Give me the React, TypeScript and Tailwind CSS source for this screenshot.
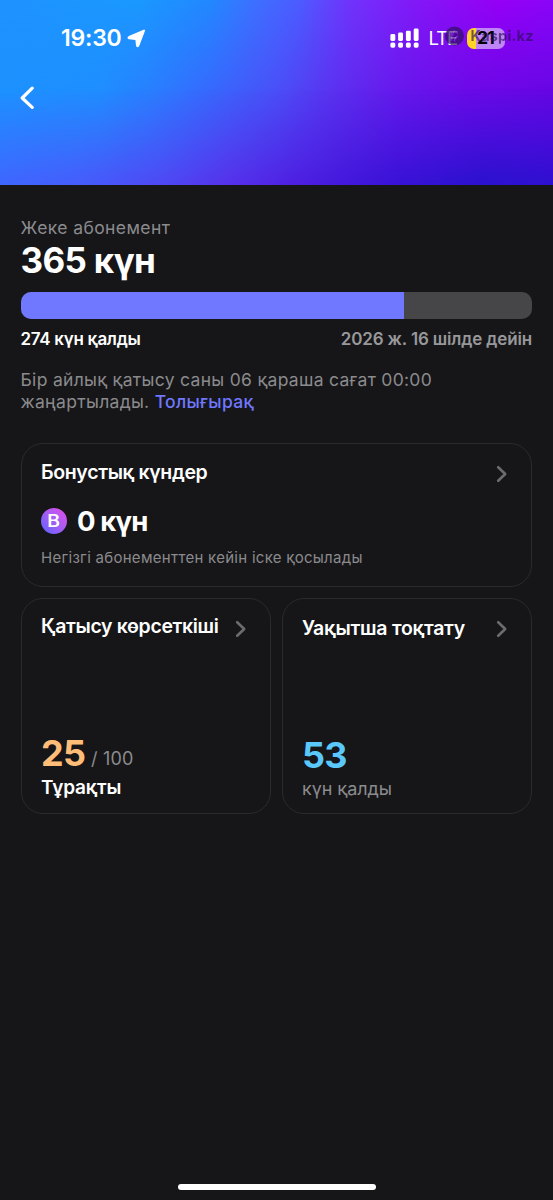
import type { ReactNode } from 'react';
import { clsx } from 'clsx';

function StatusBar() {
  const bars = [
    { x: 389.9, top: 33.6 },
    { x: 397.6, top: 32 },
    { x: 405.4, top: 30.2 },
    { x: 413.2, top: 28 },
  ];

  return (
    <div className="relative flex h-[76px] items-center justify-between text-white">
      <div className="flex items-center gap-[5px] pl-[61px]">
        <span className="text-[23px] leading-7 font-semibold tracking-[-0.2px]">19:30</span>
        <svg width="19" height="19" viewBox="0 0 19 19" fill="currentColor" stroke="currentColor" strokeWidth="2" strokeLinejoin="round">
          <path d="M17 1.6 L11.2 16.8 Q10.4 18 10 16.6 L9.4 10.9 Q9.2 10 8.4 9.9 L2.2 9.3 Q0.8 8.8 2.2 8 Z" />
        </svg>
      </div>
      <div className="flex items-center pr-[48.5px]">
        <svg width="29" height="20" viewBox="389.5 27.5 29 20" fill="currentColor">
          {bars.map((bar) => (
            <g key={bar.x}>
              <rect x={bar.x} y={bar.top} width="4.9" height={40.4 - bar.top} rx="1.4" />
              <rect x={bar.x} y="42" width="4.9" height="5.2" rx="1.6" />
            </g>
          ))}
        </svg>
        <span className="ml-[10px] w-7 text-[18.5px] leading-6 tracking-[-1px]">LTE</span>
        <div className="ml-[10px] flex h-[21px] w-[38px] items-center justify-center rounded-[7px] bg-linear-to-r from-[#ffd426] from-24% to-[#bd86f4] to-24% text-[17.5px] leading-5 font-bold tracking-[-0.8px] text-black">
          21
        </div>
      </div>
      <Watermark />
    </div>
  );
}

function Watermark() {
  return (
    <div className="absolute top-[26px] left-[444.5px] flex items-center gap-[7px] text-[#2a0f5a] opacity-65">
      <svg width="19" height="20" viewBox="0 0 20 20">
        <circle cx="10" cy="10" r="10" fill="currentColor" />
        <path d="M7 5 V15 M7 11 Q9 7 10 4 M10 16 Q10 11 14 10 M13 5 V8" stroke="#7a22d8" strokeWidth="1.4" fill="none" />
      </svg>
      <span className="text-[14.5px] leading-5 font-bold tracking-[0.2px]">Kaspi.kz</span>
    </div>
  );
}

function Header() {
  return (
    <header className="relative h-[185px] bg-[linear-gradient(90deg,#1c92ff_0%,#1f8eff_18%,#297fff_27%,#356cfe_36%,#4a4ff8_50%,#5a32f0_60%,#6618ec_72%,#6a0ae8_85%,#6606e4_100%)]">
      <div className="absolute inset-0 bg-[linear-gradient(90deg,#1f92ff_0%,#1a98ff_25%,#2288ff_38%,#3d70ff_46%,#4c5cff_54%,#7034fc_63%,#8416f7_76%,#9500f5_90%,#8a05f8_100%)] mask-[linear-gradient(180deg,#000_0%,transparent_52%)]" />
      <div className="absolute inset-0 bg-[linear-gradient(90deg,#3f66ff_0%,#465cfc_14%,#4f48f4_29%,#5630ea_42%,#4d1ee0_54%,#3812d6_72%,#2a12ce_87%,#2e10d0_100%)] mask-[linear-gradient(180deg,transparent_48%,#000_100%)]" />
      <StatusBar />
      <button className="relative block pt-[10px] pl-[20px]" aria-label="Back">
        <svg width="16" height="24" viewBox="0 0 16 24" fill="none" stroke="#fff" strokeWidth="3.2" strokeLinecap="round" strokeLinejoin="round">
          <path d="M12.2 2.2 L2.2 12 L12.2 21.4" />
        </svg>
      </button>
    </header>
  );
}

function Chevron() {
  return (
    <svg className="shrink-0" width="12" height="18" viewBox="0 0 12 18" fill="none" stroke="#6c6c6f" strokeWidth="2.6" strokeLinecap="round" strokeLinejoin="round">
      <path d="M2.2 2.2 L9.2 9 L2.2 15.8" />
    </svg>
  );
}

function Card({ className, children }: { className?: string; children: ReactNode }) {
  return (
    <section className={clsx('flex flex-col rounded-[22px] border border-[#2a2a2c] px-[19.5px]', className)}>
      {children}
    </section>
  );
}

export default function App() {
  return (
    <div className="flex h-[1200px] w-[553px] flex-col overflow-hidden bg-[#161618] font-['Inter',sans-serif] text-white">
      <Header />
      <main className="flex flex-1 flex-col pt-[33px] pr-[21px] pl-[20.5px]">
        <p className="text-[17.5px] leading-5 tracking-[0.4px] text-[#8b8b8e]">Жеке абонемент</p>
        <h1 className="mt-[2px] text-[35px] leading-10 font-bold tracking-[-0.7px]">365 күн</h1>
        <div className="mt-3 h-[27px] overflow-hidden rounded-[10px] bg-[#464648]">
          <div className="h-full w-3/4 bg-[#6f78ff]" />
        </div>
        <div className="mt-[10px] flex justify-between text-[17px] leading-5 font-semibold">
          <span className="tracking-[-0.3px]">274 күн қалды</span>
          <span className="tracking-[-0.15px] text-[#98989b]">2026 ж. 16 шілде дейін</span>
        </div>
        <p className="mt-[20px] text-[17.5px] leading-[22px] tracking-[0.3px] text-[#8b8b8e]">
          Бір айлық қатысу саны 06 қараша сағат 00:00
          <br />
          жаңартылады. <a className="font-medium text-[#6f78ff]">Толығырақ</a>
        </p>

        <Card className="mt-[30px] h-[144px] pt-4">
          <div className="flex items-start justify-between">
            <h2 className="text-[19.5px] leading-6 font-semibold tracking-[-0.35px]">Бонустық күндер</h2>
            <div className="pt-[5px] pr-1">
              <Chevron />
            </div>
          </div>
          <div className="mt-[20px] flex items-center gap-[10px]">
            <span className="flex size-[26px] items-center justify-center rounded-full bg-linear-to-tr from-[#5560ff] to-[#e648ea] text-[17px] leading-none font-semibold">
              <span className="scale-x-115">B</span>
            </span>
            <span className="text-[27.5px] leading-[34px] font-bold tracking-[-0.9px]">0 күн</span>
          </div>
          <p className="mt-[10px] text-[15px] leading-5 tracking-[0.28px] text-[#8b8b8e]">
            Негізгі абонементтен кейін іске қосылады
          </p>
        </Card>

        <div className="mt-[11px] grid h-[216px] grid-cols-2 gap-[10.5px]">
          <Card className="justify-between pt-[15px] pb-[13px]">
            <div className="flex items-start justify-between">
              <h2 className="text-[19.5px] leading-6 font-semibold tracking-[-0.35px] whitespace-nowrap">Қатысу көрсеткіші</h2>
              <div className="pt-[6px] pr-1">
                <Chevron />
              </div>
            </div>
            <div>
              <div className="flex items-baseline gap-[6px]">
                <span className="text-[36px] leading-10 font-bold tracking-[-0.8px] text-[#ffbd78]">25</span>
                <span className="-translate-y-px text-[18px] leading-6 tracking-[0.2px] text-[#8b8b8e]">/ 100</span>
              </div>
              <p className="mt-[3px] text-[19px] leading-6 font-semibold tracking-[-0.15px]">Тұрақты</p>
            </div>
          </Card>
          <Card className="justify-between pt-[17px] pb-[12px]">
            <div className="flex items-start justify-between">
              <h2 className="text-[19.5px] leading-6 font-semibold tracking-[-0.25px] whitespace-nowrap">Уақытша тоқтату</h2>
              <div className="pt-[4px] pr-1">
                <Chevron />
              </div>
            </div>
            <div>
              <div className="text-[36px] leading-10 font-bold tracking-[-0.8px] text-[#5ac8fa]">53</div>
              <p className="mt-[2px] text-[18px] leading-6 tracking-[-0.1px] text-[#8b8b8e]">күн қалды</p>
            </div>
          </Card>
        </div>
      </main>
      <div className="mx-auto mb-[10px] h-[6px] w-[198px] rounded-full bg-white" />
    </div>
  );
}
